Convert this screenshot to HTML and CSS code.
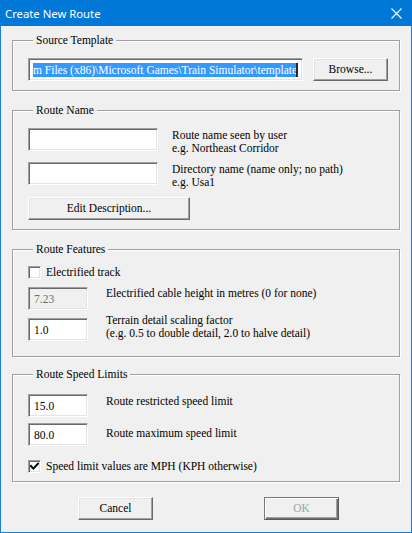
FILE: index.html
```html
<!DOCTYPE html>
<html>
<head>
<meta charset="utf-8">
<title>Create New Route</title>
<link rel="stylesheet" href="styles.css">
</head>
<body>
<div class="window">
  <div class="titlebar">
    <span class="title">Create New Route</span>
    <svg class="close" width="11" height="11" viewBox="0 0 11 11"><path d="M0.5 0.5 L10.5 10.5 M10.5 0.5 L0.5 10.5" stroke="#fff" stroke-width="1.1" fill="none"/></svg>
  </div>
  <div class="client">
    <section class="group g-source">
      <div class="legend">Source Template</div>
      <div class="row source-row">
        <div class="edit path"><span class="sel">m Files (x86)\Microsoft Games\Train Simulator\template</span><span class="caret"></span></div>
        <button class="btn browse">Browse...</button>
      </div>
    </section>

    <section class="group g-name">
      <div class="legend">Route Name</div>
      <div class="row name-row">
        <div class="edit name"></div>
        <div class="label two">Route name seen by user<br>e.g. Northeast Corridor</div>
      </div>
      <div class="row name-row second">
        <div class="edit name"></div>
        <div class="label two">Directory name (name only; no path)<br>e.g. Usa1</div>
      </div>
      <button class="btn edit-desc">Edit Description...</button>
    </section>

    <section class="group g-features">
      <div class="legend">Route Features</div>
      <label class="check-row">
        <span class="check"></span>
        <span class="label">Electrified track</span>
      </label>
      <div class="row field-row first">
        <div class="edit small disabled">7.23</div>
        <div class="label">Electrified cable height in metres (0 for none)</div>
      </div>
      <div class="row field-row">
        <div class="edit small">1.0</div>
        <div class="label up">Terrain detail scaling factor<br>(e.g. 0.5 to double detail, 2.0 to halve detail)</div>
      </div>
    </section>

    <section class="group g-speed">
      <div class="legend">Route Speed Limits</div>
      <div class="row field-row speed1">
        <div class="edit small">15.0</div>
        <div class="label down1">Route restricted speed limit</div>
      </div>
      <div class="row field-row speed2">
        <div class="edit small">80.0</div>
        <div class="label down4">Route maximum speed limit</div>
      </div>
      <label class="check-row mph">
        <span class="check checked"><svg width="9" height="9" viewBox="0 0 9 9"><path d="M1 4 L3.4 6.6 L8 1.6" stroke="#000" stroke-width="2" fill="none" stroke-linecap="square"/></svg></span>
        <span class="label">Speed limit values are MPH (KPH otherwise)</span>
      </label>
    </section>

    <div class="footer">
      <button class="btn cancel">Cancel</button>
      <button class="btn ok" disabled>OK</button>
    </div>
  </div>
</div>
</body>
</html>
```

FILE: styles.css
```css
* { box-sizing: border-box; }
html, body { margin: 0; padding: 0; }
body {
  width: 412px;
  height: 533px;
  overflow: hidden;
  background: #f0f0f0;
  font-family: "Liberation Serif", "Times New Roman", serif;
  font-size: 11.5px;
  color: #000;
}
.window {
  width: 412px;
  height: 533px;
  border: 1px solid #1a7fd6;
  border-top: 0;
  background: #f0f0f0;
  display: flex;
  flex-direction: column;
}
.titlebar {
  height: 26px;
  margin: 0 -1px;
  flex: none;
  background: #0078d7;
  color: #fff;
  display: flex;
  align-items: center;
  justify-content: space-between;
  padding: 0 10px 0 5px;
  font-family: "Noto Sans", sans-serif;
  font-size: 11.3px;
}
.close { display: block; margin-top: 1px; }
.client {
  padding: 14px 11px 0;
  display: flex;
  flex-direction: column;
}
.group {
  border: 1px solid #a0a0a0;
  box-shadow: inset 1px 1px #fff, 1px 1px 0 #fff;
  padding: 0 0 9px 15px;
  margin: 0;
  display: flex;
  flex-direction: column;
  align-items: flex-start;
}
.g-name, .g-features { margin-top: 19px; }
.g-features { padding-bottom: 15px; }
.g-speed { margin-top: 17px; padding-bottom: 8px; }
.legend {
  margin: -8px 0 0 5px;
  padding: 0 3px 0 3px;
  line-height: 14px;
  background: #f0f0f0;
  white-space: nowrap;
}
.row { display: flex; align-items: flex-start; height: 23px; }
.edit {
  flex: none;
  height: 23px;
  background: #fff;
  border: 1px solid;
  border-color: #a0a0a0 #fff #fff #a0a0a0;
  box-shadow: inset 1px 1px #696969, inset -1px -1px #e3e3e3;
  display: flex;
  align-items: center;
  padding: 0 4px 0 5px;
  white-space: nowrap;
  line-height: 14px;
}
.btn {
  height: 23px;
  width: 75px;
  margin: 0;
  padding: 0;
  background: #f0f0f0;
  border: 1px solid;
  border-color: #fff #696969 #696969 #fff;
  box-shadow: inset -1px -1px #a0a0a0, inset 1px 1px #e3e3e3;
  font: inherit;
  color: #000;
  text-align: center;
  line-height: 19px;
}
/* Source template */
.source-row { margin-top: 11px; }
.path { width: 275px; padding-left: 4px; }
.sel {
  display: block;
  width: 263px;
  overflow: hidden;
  background: #3399ff;
  color: #fff;
  line-height: 14px;
}
.caret { width: 2px; height: 14px; background: #2a2a2a; }
.browse { margin-left: 10px; }

/* Route name */
.name-row { margin-top: 11px; }
.name-row.second { margin-top: 11px; }
.edit.name { width: 130px; }
.label { line-height: 13px; white-space: nowrap; }
.label.two { margin: 1px 0 0 14px; }
.edit-desc { width: 162px; margin-top: 12px; }

/* Features */
.check-row {
  display: flex;
  align-items: center;
  height: 13px;
  margin-top: 10px;
}
.check {
  width: 13px;
  height: 13px;
  background: #fff;
  border: 1px solid;
  border-color: #a0a0a0 #fff #fff #a0a0a0;
  box-shadow: inset 1px 1px #696969, inset -1px -1px #e3e3e3;
  display: flex;
  align-items: center;
  justify-content: center;
  margin-right: 5px;
}
.check svg { display: block; }
.field-row { margin-top: 8px; }
.edit.small { width: 60px; padding-left: 5px; }
.edit.disabled { background: #f0f0f0; color: #6d6d6d; }
.field-row .label { margin-left: 18px; }
.label.up { margin-top: -4px; }

/* Speed */
.field-row.speed1 { margin-top: 13px; }
.field-row.speed2 { margin-top: 6px; }
.label.down1 { margin-top: 1px; }
.label.down4 { margin-top: 4px; }
.check-row.mph { margin-top: 14px; }

/* Footer */
.footer {
  display: flex;
  margin-top: 15px;
  padding-left: 66px;
}
.ok {
  margin-left: 111px;
  color: #a0a0a0;
  border-color: #7a7a7a #5a5a5a #5a5a5a #7a7a7a;
  box-shadow: inset 1px 1px #fff, inset -1px -1px #6d6d6d, inset -2px -2px #a0a0a0;
}
```
